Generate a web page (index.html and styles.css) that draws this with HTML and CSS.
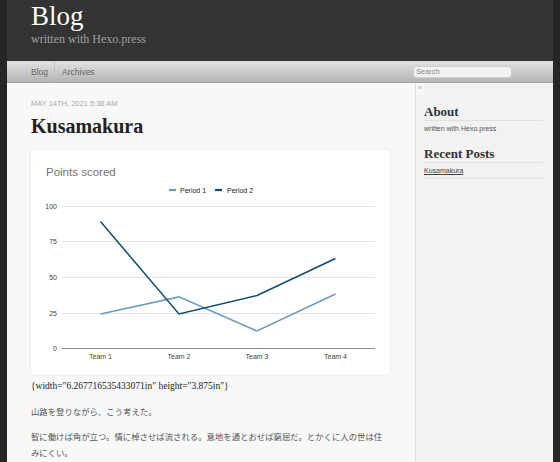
FILE: index.html
```html
<!DOCTYPE html>
<html>
<head>
<meta charset="utf-8">
<link rel="stylesheet" href="styles.css">
</head>
<body>
<div class="page">
  <header class="site-header">
    <h1 class="site-title">Blog</h1>
    <p class="site-subtitle">written with Hexo.press</p>
  </header>
  <nav class="site-nav">
    <ul class="nav-links">
      <li><a href="#">Blog</a></li>
      <li><a href="#">Archives</a></li>
    </ul>
    <div class="search"><span class="search-box">Search</span></div>
  </nav>
  <div class="content">
    <main class="main">
      <article class="post">
        <p class="post-date">May 14th, 2021 5:38 am</p>
        <h2 class="post-title">Kusamakura</h2>
        <div class="chart-card">
          <svg class="chart" width="359" height="225" viewBox="0 0 359 225" xmlns="http://www.w3.org/2000/svg">
            <text x="15" y="26" class="chart-title">Points scored</text>
            <line x1="138" y1="40" x2="145" y2="40" stroke="#6c9bc2" stroke-width="2.2"/>
            <text x="149" y="42.5" class="legend">Period 1</text>
            <line x1="184" y1="40" x2="191" y2="40" stroke="#0f4c75" stroke-width="2.2"/>
            <text x="196" y="42.5" class="legend">Period 2</text>
            <g stroke="#e4e4e4" stroke-width="1">
              <line x1="31" y1="56.5" x2="344" y2="56.5"/>
              <line x1="31" y1="91.5" x2="344" y2="91.5"/>
              <line x1="31" y1="127.5" x2="344" y2="127.5"/>
              <line x1="31" y1="163.5" x2="344" y2="163.5"/>
            </g>
            <line x1="31" y1="198.5" x2="344" y2="198.5" stroke="#8a8a8a" stroke-width="1"/>
            <g class="axis" text-anchor="end">
              <text x="26" y="59">100</text>
              <text x="26" y="94">75</text>
              <text x="26" y="130">50</text>
              <text x="26" y="166">25</text>
              <text x="26" y="201">0</text>
            </g>
            <g class="axis" text-anchor="middle">
              <text x="69.5" y="209">Team 1</text>
              <text x="148" y="209">Team 2</text>
              <text x="226" y="209">Team 3</text>
              <text x="304.5" y="209">Team 4</text>
            </g>
            <polyline fill="none" stroke="#6c9bc2" stroke-width="1.5" points="69.5,163.9 148,146.9 226,181 304.5,144"/>
            <polyline fill="none" stroke="#0f4c75" stroke-width="1.5" points="69.5,71.6 148,163.9 226,145.5 304.5,108.5"/>
          </svg>
        </div>
        <p class="attr">{width="6.267716535433071in" height="3.875in"}</p>
        <p class="jp">山路を登りながら、こう考えた。</p>
        <p class="jp">智に働けば角が立つ。情に棹させば流される。意地を通とおせば窮屈だ。とかくに人の世は住みにくい。</p>
      </article>
    </main>
    <aside class="sidebar">
      <span class="toggle">»</span>
      <section class="widget">
        <h3 class="widget-title">About</h3>
        <p class="widget-text">written with Hexo.press</p>
      </section>
      <section class="widget">
        <h3 class="widget-title">Recent Posts</h3>
        <ul class="widget-list">
          <li><a href="#">Kusamakura</a></li>
        </ul>
      </section>
    </aside>
  </div>
</div>
</body>
</html>
```

FILE: styles.css
```css
html, body {
  margin: 0;
  padding: 0;
  height: 100%;
}
body {
  background: #262626;
  font-family: "Liberation Sans", Arial, sans-serif;
}
.page {
  margin: 0 7px;
  min-height: 100%;
  display: flex;
  flex-direction: column;
  background: #f8f8f8;
}
.site-header {
  background: #333333;
  height: 61px;
  padding-left: 24px;
  box-sizing: border-box;
  overflow: hidden;
}
.site-title {
  margin: 0;
  padding-top: 0;
  font-family: "Liberation Serif", serif;
  font-weight: normal;
  font-size: 27px;
  line-height: 32px;
  color: #ffffff;
}
.site-subtitle {
  margin: 0;
  font-family: "Liberation Serif", serif;
  font-size: 12px;
  line-height: 14px;
  color: #a0a0a0;
}
.site-nav {
  height: 20px;
  display: flex;
  align-items: center;
  justify-content: space-between;
  background: linear-gradient(#e0e0e0, #b4b4b4);
  border-top: 1px solid #d8d8d8;
  border-bottom: 1px solid #a5a5a5;
  padding: 0 41px 0 24px;
}
.nav-links {
  list-style: none;
  margin: 0;
  padding: 0;
  display: flex;
}
.nav-links li {
  font-size: 8.5px;
  line-height: 20px;
}
.nav-links li + li {
  border-left: 1px solid #c0c0c0;
  margin-left: 6px;
  padding-left: 7px;
}
.nav-links a {
  color: #666;
  text-decoration: none;
}
.search-box {
  display: block;
  width: 95px;
  height: 10px;
  border: 1px solid #cfcfcf;
  border-radius: 4px;
  background: #f2f2f2;
  font-size: 7.5px;
  line-height: 10px;
  color: #888;
  padding-left: 2px;
}
.content {
  flex: 1;
  display: flex;
}
.main {
  flex: 1;
  padding: 15px 25px 0 24px;
  min-width: 0;
}
.post-date {
  margin: 0;
  font-size: 7.5px;
  line-height: 12px;
  text-transform: uppercase;
  color: #a8a8a8;
}
.post-title {
  margin: 3px 0 0;
  font-family: "Liberation Serif", serif;
  font-weight: bold;
  font-size: 20px;
  line-height: 26px;
  color: #222;
}
.chart-card {
  margin-top: 11px;
  background: #ffffff;
  border-radius: 4px;
  box-shadow: 0 0 2px rgba(0,0,0,0.12);
  height: 225px;
}
.chart {
  display: block;
}
.chart-title {
  font-family: "Liberation Sans", Arial, sans-serif;
  font-size: 11.5px;
  fill: #757575;
}
.legend {
  font-family: "Liberation Sans", Arial, sans-serif;
  font-size: 7px;
  fill: #222;
}
.axis text {
  font-family: "Liberation Sans", Arial, sans-serif;
  font-size: 7px;
  fill: #444;
}
.attr {
  margin: 3px 0 0;
  font-family: "Liberation Serif", serif;
  font-size: 9.5px;
  line-height: 16px;
  color: #222;
}
.jp {
  margin: 9px 0 0;
  font-family: "Noto Sans CJK JP", sans-serif;
  font-size: 8.4px;
  line-height: 16px;
  color: #555;
}
.sidebar {
  width: 119px;
  flex: none;
  background: #f2f2f2;
  border-left: 1px solid #e2e2e2;
  padding: 0 10px 0 8px;
  position: relative;
}
.toggle {
  position: absolute;
  left: 0;
  top: 0;
  width: 8px;
  height: 12px;
  background: #f8f8f8;
  color: #b0b0b0;
  font-size: 8px;
  line-height: 10px;
  text-align: center;
}
.widget {
  margin-top: 22px;
}
.widget + .widget {
  margin-top: 13px;
}
.widget-title {
  margin: 0;
  font-family: "Liberation Serif", serif;
  font-weight: bold;
  font-size: 13px;
  line-height: 14px;
  color: #333;
  padding-bottom: 1px;
  border-bottom: 1px solid #e0e0e0;
}
.widget-text {
  margin: 3px 0 0;
  font-size: 7px;
  line-height: 10px;
  color: #555;
}
.widget-list {
  list-style: none;
  margin: 0;
  padding: 0;
}
.widget-list li {
  font-size: 7px;
  line-height: 15px;
  border-bottom: 1px solid #e6e6e6;
}
.widget-list a {
  color: #444;
}
```
